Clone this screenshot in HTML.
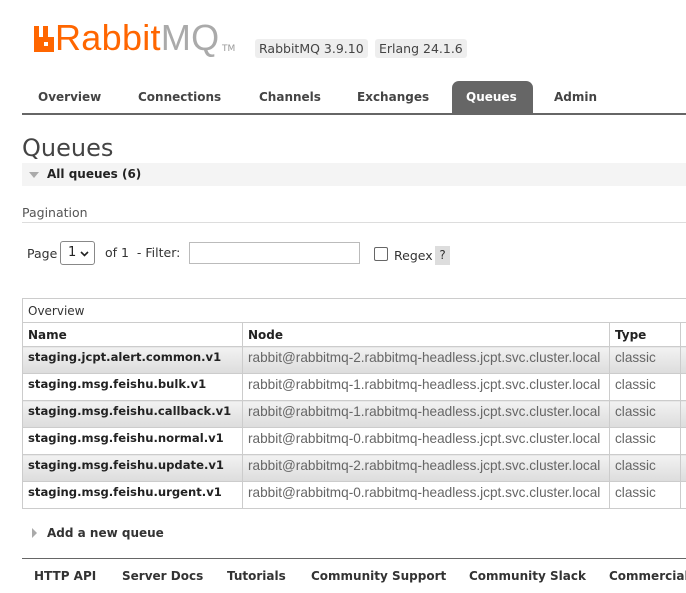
<!DOCTYPE html>
<html><head><style>
body{margin:0;width:686px;height:593px;overflow:hidden;background:#fff;font-family:"DejaVu Sans","Liberation Sans",sans-serif;color:#484848;position:relative}
.a{position:absolute;white-space:nowrap}
.b{font-weight:bold}
.nav span{position:absolute;top:90px;font-size:12px;font-weight:bold;color:#444}
table{position:absolute;left:22px;top:298px;border-collapse:collapse;font-size:12px;width:680px;table-layout:fixed}
td,th{border:1px solid #ccc;padding:0 5px;text-align:left;height:26px;overflow:hidden;white-space:nowrap}
tr.r td{padding-bottom:6px;height:20px}
th{font-weight:bold;color:#222;height:23px;font-size:12px}
tr.o td{background:linear-gradient(#f2f2f2,#dcdcdc)}
td{color:#666;font-family:"Liberation Sans",sans-serif;font-size:13.6px}
td.n{font-weight:bold;color:#222;font-family:"DejaVu Sans",sans-serif;font-size:11.6px}
.ft span{position:absolute;top:569px;font-size:12px;font-weight:bold;color:#333}
</style></head><body>
<svg class="a" style="left:34px;top:26px" width="20" height="26" viewBox="0 0 20 26"><path d="M0 0h5v11h4V0h5v11h6v15H0z" fill="#f60"/><rect x="10" y="16" width="4" height="4" fill="#fff"/></svg>
<div class="a" style="left:55px;top:17px;font-size:36px;font-family:'Liberation Sans',sans-serif;color:#f60;letter-spacing:0.3px">Rabbit<span style="color:#aaa">MQ</span></div>
<div class="a" style="left:222px;top:44px;font-size:9px;color:#999">TM</div>
<div class="a" style="left:255px;top:39px;background:#eee;border-radius:3px;padding:2px 4px;font-size:12.5px;color:#444">RabbitMQ 3.9.10</div>
<div class="a" style="left:375px;top:39px;background:#eee;border-radius:3px;padding:2px 4px;font-size:12.5px;color:#444">Erlang 24.1.6</div>
<div class="nav">
<span style="left:38px">Overview</span><span style="left:138px">Connections</span><span style="left:259px">Channels</span><span style="left:357px">Exchanges</span>
<div class="a" style="left:452px;top:81px;width:81px;height:32px;background:#666;border-radius:7px 7px 0 0"></div>
<span style="left:466px;color:#fff">Queues</span><span style="left:554px">Admin</span>
</div>
<div class="a" style="left:22px;top:113px;width:664px;height:2px;background:#666"></div>
<div class="a" style="left:22px;top:134px;font-size:24px;color:#444">Queues</div>
<div class="a" style="left:22px;top:163px;width:664px;height:23px;background:#f4f4f4"></div>
<div class="a" style="left:29px;top:172px;width:0;height:0;border-left:5px solid transparent;border-right:5px solid transparent;border-top:6px solid #aaa"></div>
<div class="a b" style="left:47px;top:167px;font-size:12px;color:#222">All queues (6)</div>
<div class="a" style="left:22px;top:205px;font-size:12.5px;color:#555">Pagination</div>
<div class="a" style="left:22px;top:222px;width:664px;height:1px;background:#ddd"></div>
<div class="a" style="left:27px;top:246px;font-size:12.5px;color:#333">Page</div>
<div class="a" style="left:60px;top:241px;width:35px;height:24px;border:1px solid #888;border-radius:3px;font-size:13px;color:#222;box-sizing:border-box;padding:3px 0 0 7px">1<svg style="position:absolute;left:19px;top:9px" width="9" height="6" viewBox="0 0 9 6"><path d="M1 1l3.5 3.5L8 1" stroke="#222" stroke-width="1.6" fill="none"/></svg></div>
<div class="a" style="left:105px;top:245px;font-size:12.5px;color:#333">of 1 &nbsp;- Filter:</div>
<div class="a" style="left:189px;top:242px;width:171px;height:22px;border:1px solid #bbb;box-sizing:border-box"></div>
<div class="a" style="left:374px;top:247px;width:12px;height:12px;border:1px solid #666;border-radius:2px"></div>
<div class="a" style="left:394px;top:248px;font-size:12.5px;color:#333">Regex</div>
<div class="a" style="left:435px;top:246px;width:15px;height:19px;background:#ddd;font-size:12px;text-align:center;line-height:19px;color:#333">?</div>
<table>
<colgroup><col style="width:220px"><col style="width:367px"><col style="width:71px"><col></colgroup>
<tr><td colspan="4" style="color:#333;font-family:'DejaVu Sans',sans-serif;font-size:12px;height:23px">Overview</td></tr>
<tr><th>Name</th><th>Node</th><th>Type</th><th></th></tr>
<tr class="o r"><td class="n">staging.jcpt.alert.common.v1</td><td>rabbit@rabbitmq-2.rabbitmq-headless.jcpt.svc.cluster.local</td><td>classic</td><td></td></tr>
<tr class="r"><td class="n">staging.msg.feishu.bulk.v1</td><td>rabbit@rabbitmq-1.rabbitmq-headless.jcpt.svc.cluster.local</td><td>classic</td><td></td></tr>
<tr class="o r"><td class="n">staging.msg.feishu.callback.v1</td><td>rabbit@rabbitmq-1.rabbitmq-headless.jcpt.svc.cluster.local</td><td>classic</td><td></td></tr>
<tr class="r"><td class="n">staging.msg.feishu.normal.v1</td><td>rabbit@rabbitmq-0.rabbitmq-headless.jcpt.svc.cluster.local</td><td>classic</td><td></td></tr>
<tr class="o r"><td class="n">staging.msg.feishu.update.v1</td><td>rabbit@rabbitmq-2.rabbitmq-headless.jcpt.svc.cluster.local</td><td>classic</td><td></td></tr>
<tr class="r"><td class="n">staging.msg.feishu.urgent.v1</td><td>rabbit@rabbitmq-0.rabbitmq-headless.jcpt.svc.cluster.local</td><td>classic</td><td></td></tr>
</table>
<div class="a" style="left:32px;top:528px;width:0;height:0;border-top:5px solid transparent;border-bottom:5px solid transparent;border-left:5px solid #aaa"></div>
<div class="a b" style="left:47px;top:526px;font-size:12px;color:#333">Add a new queue</div>
<div class="a" style="left:22px;top:558px;width:664px;height:1px;background:#666"></div>
<div class="ft"><span style="left:34px">HTTP API</span><span style="left:122px">Server Docs</span><span style="left:227px">Tutorials</span><span style="left:311px">Community Support</span><span style="left:469px">Community Slack</span><span style="left:609px">Commercial</span></div>
</body></html>
